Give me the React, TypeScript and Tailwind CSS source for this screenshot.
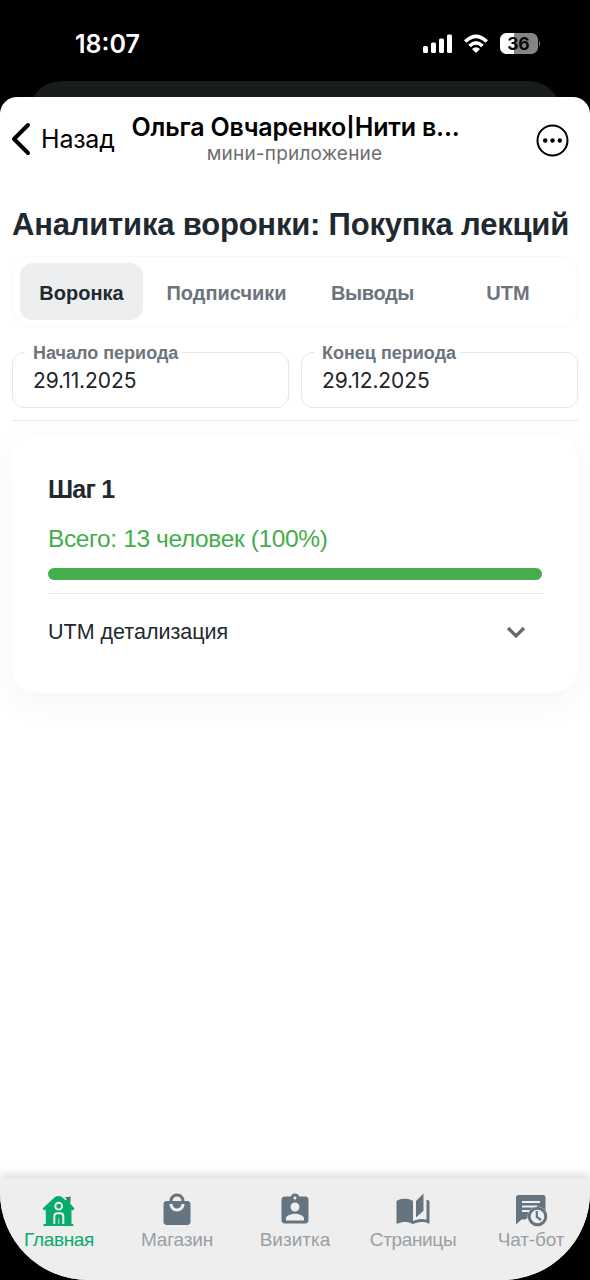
import React from 'react';
import { MdAssignmentInd, MdAutoStories, MdLocalMall } from 'react-icons/md';

function HomeIcon() {
  return (
    <svg width="36" height="36" viewBox="0 0 36 36" fill="none">
      <path fill="currentColor" d="M1.500 16.500 13.500 5.500q4-2.800 8 0l3 2.700 4.800-3.700v7.200l4.200 4.800-1.500 2-1.500-1V32h1.800v2H2.500v-2h2.300V17.500l-1.500 1z" />
      <path fill="#467967" d="m23.500 5.500 5.800-1v5z" />
      <circle cx="17.700" cy="14.200" r="3.400" stroke="#efefef" strokeWidth="1.900" />
      <path d="M13.300 32v-7.500q0-3.200 3.200-3.200h2.600q3.200 0 3.200 3.200V32" stroke="#efefef" strokeWidth="2" />
      <path d="M17.800 26.500V32" stroke="#efefef" strokeWidth=".8" />
    </svg>
  );
}

function ChatIcon() {
  return (
    <svg width="36" height="36" viewBox="0 0 36 36" fill="none">
      <path fill="currentColor" d="M5.500 3h24.500q2.500 0 2.500 2.500v14h-6L12 27.500H8.500L3 32.500V5.500Q3 3 5.500 3" />
      <path stroke="#efefef" strokeWidth="2" d="M9 10h18M9 14.500h15M9 19h8" />
      <circle cx="24.500" cy="24.500" r="10" fill="#efefef" />
      <circle cx="24.500" cy="24.500" r="8.300" stroke="currentColor" strokeWidth="3" />
      <path stroke="currentColor" strokeWidth="2.200" d="M23.800 19v6l4.300 3" />
    </svg>
  );
}

const tabs = [
  { label: 'Главная', cls: 'tracking-[-0.35px]', icon: <HomeIcon />, on: true },
  { label: 'Магазин', cls: 'tracking-[-0.15px]', icon: <MdLocalMall size={36} /> },
  { label: 'Визитка', cls: '', icon: <MdAssignmentInd size={36} /> },
  { label: 'Страницы', cls: 'tracking-[-0.35px]', icon: <MdAutoStories size={36} /> },
  { label: 'Чат-бот', cls: 'tracking-[-0.15px]', icon: <ChatIcon /> },
];

function Field({ label, value }: { label: string; value: string }) {
  return (
    <div className="relative h-[56px] flex-1 rounded-[12px] border border-[#e4e6e8] pl-5 pt-[16px]">
      <span className="absolute left-[12px] top-[-12px] whitespace-nowrap bg-white pr-1 pl-2 text-[18px] leading-6 font-bold text-[#6c757d]">{label}</span>
      <span className="block font-[Inter] text-[21px] leading-6 tracking-[-0.1px] text-[#212529]">{value}</span>
    </div>
  );
}

export default function App() {
  return (
    <div className="flex h-[1280px] w-[590px] flex-col overflow-hidden bg-black font-['Liberation_Sans',sans-serif] text-[#212930]">
      <div className="flex h-[81px] shrink-0 items-start justify-between pl-[75px] pr-[49px] pt-[29px] text-white">
        <span className="font-[Inter] text-[25px] leading-[30px] font-semibold">18:07</span>
        <svg width="118" height="24" viewBox="0 0 118 24" className="mt-[3px]">
          <g fill="white">
            <rect y="14" width="5" height="7" rx="1.500" />
            <rect x="8" y="10.500" width="5" height="10.500" rx="1.500" />
            <rect x="16" y="6.500" width="5" height="14.500" rx="1.500" />
            <rect x="24" y="2.500" width="5" height="18.500" rx="1.500" />
          </g>
          <g fill="none" stroke="white" strokeWidth="3.700">
            <path d="M42.300 9.500q10.700-10.300 21.400 0" />
            <path d="M46.500 14q6.500-6.200 13 0" />
          </g>
          <path fill="white" d="m53 21-4-4q4-3.600 8 0z" />
          <clipPath id="battery"><rect x="77" y="1" width="38" height="21" rx="6.500" /></clipPath>
          <g clipPath="url(#battery)">
            <rect x="77" y="1" width="38" height="21" fill="#858585" />
            <rect x="77" y="1" width="14" height="21" fill="white" />
          </g>
          <path d="M116 8.500q2 3 0 6z" fill="#858585" />
          <text x="95.300" y="18" textAnchor="middle" fontFamily="Inter" fontWeight="700" fontSize="17.500" letterSpacing="-.3" fill="#080808">36</text>
        </svg>
      </div>
      <div className="mx-[28px] mb-[-24px] h-[40px] shrink-0 rounded-t-[34px] bg-[#191c1d]" />
      <main className="z-10 flex min-h-0 flex-1 flex-col overflow-hidden rounded-t-[17px] rounded-b-[88px] bg-white">
        <header className="flex h-[96px] shrink-0 items-start">
          <div className="flex w-[131px] items-center pl-[11px] pt-[25px]">
            <svg width="22" height="34" viewBox="0 0 22 34" fill="none" stroke="black" strokeWidth="4" strokeLinecap="round" strokeLinejoin="round"><path d="M17 3 3 17l14 14" /></svg>
            <span className="ml-[8px] font-[Inter] text-[25px] leading-[32px] tracking-[-0.2px] text-black">Назад</span>
          </div>
          <div className="flex w-[329px] flex-col items-center pt-[15px] font-[Inter]">
            <span className="whitespace-nowrap text-[25px] leading-[30px] font-semibold tracking-[-0.2px] text-black">
              Ольга Овчаренко<span className="inline-block origin-center scale-y-[0.78]">|</span>Нити в...
            </span>
            <span className="whitespace-nowrap pr-[2px] text-[19px] leading-[24px] tracking-[0.2px] text-[#6d6d6d]">мини-приложение</span>
          </div>
          <svg className="mt-[27px] ml-[76px]" width="34" height="34" viewBox="0 0 34 34" fill="none"><circle cx="16.500" cy="16.500" r="15" stroke="black" strokeWidth="2" /><g fill="black"><circle cx="9.200" cy="16.500" r="2.200" /><circle cx="16.500" cy="16.500" r="2.200" /><circle cx="23.800" cy="16.500" r="2.200" /></g></svg>
        </header>
        <h1 className="mt-[14px] ml-[12px] whitespace-nowrap text-[31px] leading-[36px] font-bold tracking-[-0.2px]">Аналитика воронки: Покупка лекций</h1>
        <nav className="mx-3 mt-[13px] flex h-[71px] shrink-0 items-center rounded-[16px] border border-[#f8f9fa] px-[7px] text-[20px] font-bold text-[#6c757d]">
          <div className="flex h-[57px] w-[123px] items-center justify-center rounded-[13px] bg-[#eceef0] pt-[2px] text-[#212930]">Воронка</div>
          <div className="flex w-[167px] justify-center pt-[2px]">Подписчики</div>
          <div className="flex w-[125px] justify-center pt-[2px] tracking-[-0.4px]">Выводы</div>
          <div className="flex flex-1 justify-center pt-[2px] pl-[11px]">UTM</div>
        </nav>
        <div className="mx-3 mt-[25px] flex gap-3">
          <Field label="Начало периода" value="29.11.2025" />
          <Field label="Конец периода" value="29.12.2025" />
        </div>
        <div className="mx-3 mt-[12px] h-px shrink-0 bg-[#e4e6e8]" />
        <section className="mx-3 mt-[14px] flex h-[258px] shrink-0 flex-col rounded-[25px] bg-white px-[36px] pt-[39px] shadow-[0_10px_32px_rgba(33,50,60,0.05)]">
          <h2 className="text-[25px] leading-[30px] font-bold tracking-[-0.8px]">Шаг 1</h2>
          <span className="mt-[20px] text-[24.5px] leading-[30px] tracking-[-0.38px] text-[#45ad4b]">Всего: 13 человек (100%)</span>
          <div className="mt-[14px] h-[12px] w-[494px] shrink-0 rounded-full bg-[#45ad4b]" />
          <div className="mt-[13px] h-px w-[495px] shrink-0 bg-[#e6e8ea]" />
          <div className="mt-[24px] flex items-center justify-between pr-[14px] text-[21.5px] leading-[28px]">
            <span>UTM детализация</span>
            <svg width="24" height="24" viewBox="0 0 24 24" fill="none" stroke="#656a70" strokeWidth="3.200"><path d="m4 8 8 8 8-8" /></svg>
          </div>
        </section>
        <footer className="mt-auto flex h-[102px] shrink-0 bg-[#eee] pt-[14px] shadow-[0_-3px_9px_rgba(0,0,0,0.16)]">
          {tabs.map((t) => (
            <div key={t.label} className={`flex flex-1 flex-col items-center ${t.on ? 'text-[#09ab6c]' : 'text-[#647480]'}`}>
              {t.icon}
              <span className={`whitespace-nowrap text-[19px] leading-6 ${t.cls} ${t.on ? 'text-[#09ab6c]' : 'text-[#999fa5]'}`}>{t.label}</span>
            </div>
          ))}
        </footer>
      </main>
    </div>
  );
}
